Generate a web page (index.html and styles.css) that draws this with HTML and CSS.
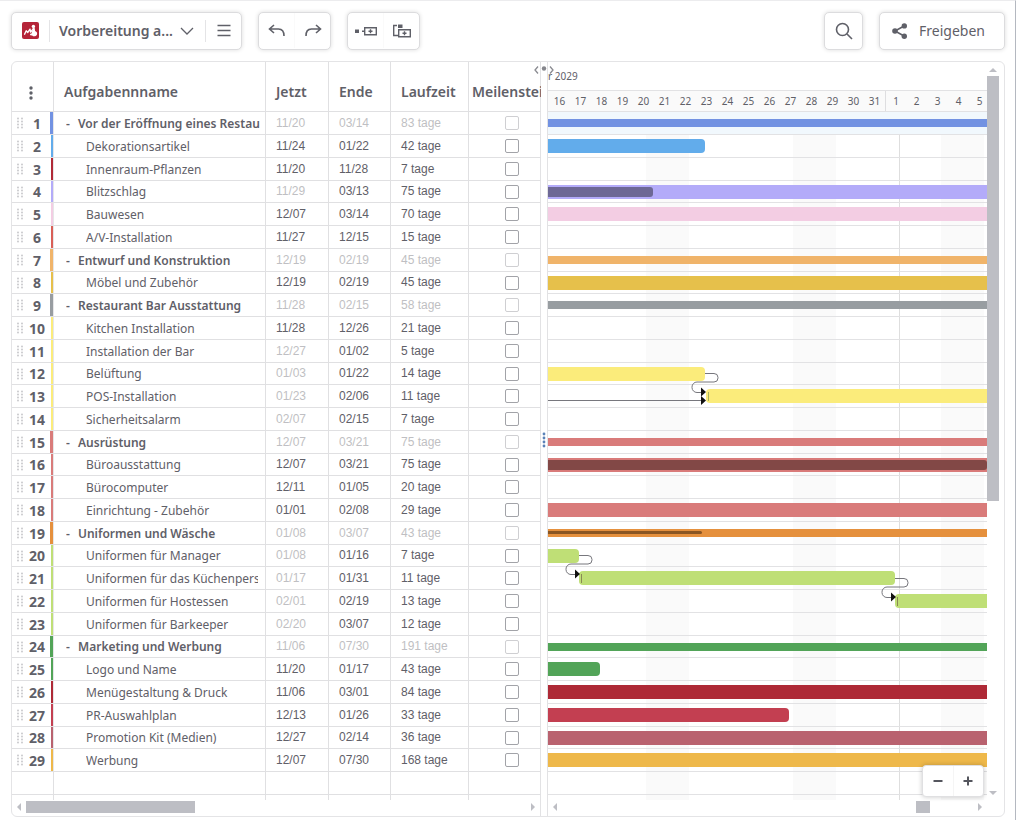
FILE: index.html
```html
<!DOCTYPE html>
<html lang="de">
<head>
<meta charset="utf-8">
<title>Vorbereitung auf die Eröffnung</title>
<link rel="stylesheet" href="styles.css">
</head>
<body>
<div class="app">
  <header class="toolbar">
    <div class="box">
      <button class="logo" aria-label="Startseite">
        <svg width="18" height="18" viewBox="0 0 18 18"><rect width="17" height="17" rx="2" fill="#b52438"/><path d="M2.600 12.200 4.200 8.800l1.600 1.600L8 7.200l.6 2.800 2-2.200" fill="none" stroke="#fff" stroke-width="1.400" stroke-linecap="round" stroke-linejoin="round"/><circle cx="11.400" cy="4.400" r="1.700" fill="#fff"/><path d="M10.200 6.400 12.600 5.600l.5 3.400c1.900.6 2.500 2.400 1.700 3.900-1 1.700-3.500 1.800-4.600.5l-1.900-.2-.4-1.300 1.900-.6c-.2-1.300.2-2.200 1-2.700z" fill="#fff"/></svg>
      </button>
      <button class="title">Vorbereitung a...
        <svg width="14" height="10" viewBox="0 0 14 10"><path d="M1 2l6 6 6-6" class="thin"/></svg>
      </button>
      <button class="menu" aria-label="Menü">
        <svg width="14" height="14" viewBox="0 0 14 14"><path d="M.5 1.500h13M.5 6.500h13M.5 11.500h13" class="thin"/></svg>
      </button>
    </div>
    <div class="box pair">
      <button aria-label="Rückgängig"><svg width="18" height="16" viewBox="0 0 18 16"><path d="M6 2 1.500 6 6 10M1.500 6h9c4 0 5.500 2 5.500 7" class="stroke"/></svg></button>
      <button aria-label="Wiederholen"><svg width="18" height="16" viewBox="0 0 18 16"><path d="M12 2l4.500 4L12 10M16.500 6h-9C3.500 6 2 8 2 13" class="stroke"/></svg></button>
    </div>
    <div class="box pair">
      <button aria-label="Aufgabe hinzufügen"><svg width="22" height="10" viewBox="0 0 22 10"><path d="M0 3.500h4v3.500H0z" fill="#5f6068"/><path d="M9.700 1.700h11.600v7H9.700zM7 5.200h2.500M13.500 5.200h4M15.500 3.200v4" class="icon"/></svg></button>
      <button aria-label="Unteraufgabe hinzufügen"><svg width="20" height="16" viewBox="0 0 20 16"><path d="M6 1.500h4.500V5H6z" fill="#5f6068"/><path d="M5 2.500H1.700v10H6M6.700 6.700h11.600v7H6.700zM10.500 10.200h4M12.500 8.200v4" class="icon"/></svg></button>
    </div>
    <button class="box search" aria-label="Suchen"><svg width="18" height="18" viewBox="0 0 18 18"><circle cx="7.500" cy="7.500" r="6" class="stroke"/><path d="M12 12l5 5" class="stroke"/></svg></button>
    <button class="box share"><svg width="16" height="16" viewBox="0 0 16 16"><path d="M12.500 2.800 3 8l9.500 5.300" class="stroke"/><circle cx="12.300" cy="2.900" r="2.700" fill="#5f6068"/><circle cx="3" cy="8" r="2.800" fill="#5f6068"/><circle cx="12.300" cy="13.200" r="2.700" fill="#5f6068"/></svg>Freigeben</button>
  </header>

  <main class="panel">
    <section class="list">
      <table>
        <colgroup><col class="c-num"><col class="c-name"><col class="c-start"><col class="c-end"><col class="c-time"><col class="c-mile"></colgroup>
        <thead>
          <tr>
            <th><button class="dots" aria-label="Spalten"><svg width="4" height="14" viewBox="0 0 4 14"><circle cx="2" cy="2" r="1.700"/><circle cx="2" cy="7" r="1.700"/><circle cx="2" cy="12" r="1.700"/></svg></button></th>
            <th>Aufgabennname</th><th>Jetzt</th><th>Ende</th><th>Laufzeit</th><th class="mile">Meilenstei</th>
          </tr>
        </thead>
        <tbody id="tasks"></tbody>
      </table>
      <div class="hscroll"><i class="arrow left"></i><i class="thumb wide"></i><i class="arrow right"></i></div>
    </section>

    <div class="splitter">
      <svg class="toggle" width="22" height="10" viewBox="0 0 22 10"><path d="M5 1.500 2 5l3 3.500M17 1.500 20 5l-3 3.500" fill="none" stroke="#8a8b91" stroke-width="1.300"/><circle cx="11" cy="3.500" r="2.200" fill="#85868c"/></svg>
      <svg class="grip" width="4" height="16" viewBox="0 0 4 16"><circle cx="2" cy="2" r="1.400"/><circle cx="2" cy="6" r="1.400"/><circle cx="2" cy="10" r="1.400"/><circle cx="2" cy="14" r="1.400"/></svg>
    </div>

    <section class="chart">
      <div class="month">r 2029</div>
      <div class="days" id="days"></div>
      <div class="canvas">
        <svg class="layer" aria-hidden="true"><g fill="#fafafa"><rect x="98" width="43" height="100%"/><rect x="245" width="43" height="100%"/><rect x="393" width="43" height="100%"/></g><rect x="351" width="1" height="100%" fill="#dedede"/></svg>
        <div class="bars" id="bars"></div>
        <svg class="layer" aria-hidden="true">
          <defs>
            <g id="link">
              <path d="M0 .5h9a4 4 0 0 1 4 4v.500a4 4 0 0 1-4 4H-8a5 5 0 0 0-5 5v.500a5 5 0 0 0 5 5h5" fill="none" stroke="#77777d"/>
              <path d="M-4 14.500 1 19l-5 4.500z" fill="#111"/>
            </g>
          </defs>
          <path d="M0 288.500h154" stroke="#77777d"/>
          <use href="#link" x="157" y="261"/>
          <path d="M153 284l5 4.500-5 4.500z" fill="#111"/>
          <use href="#link" x="31" y="443"/>
          <use href="#link" x="347" y="466"/>
          <path d="M160.500 280v9" stroke="#a9b45f"/><path d="M33.500 462v9M349.500 485v9" stroke="#8a8a55"/>
        </svg>
      </div>
      <div class="hscroll"><i class="arrow left"></i><i class="gap"></i><i class="thumb small"></i><i class="arrow right end"></i></div>
      <div class="zoom"><button aria-label="Verkleinern"><svg width="10" height="10" viewBox="0 0 10 10"><path d="M.5 5h9"/></svg></button><button aria-label="Vergrößern"><svg width="10" height="10" viewBox="0 0 10 10"><path d="M.5 5h9M5 .5v9"/></svg></button></div>
    </section>

    <div class="vscroll"><i class="arrow up"></i><i class="thumb tall"></i><i class="arrow down"></i></div>
  </main>
</div>
<script src="app.js"></script>
</body>
</html>
```
FILE: styles.css
```css
* { box-sizing: border-box; }
body { margin: 0; background: #fff; color: #5f6068; font-family: "Noto Sans", sans-serif; font-size: 12px; }
button { margin: 0; padding: 0; border: 0; background: none; font: inherit; color: inherit; }
svg { display: block; flex: none; }
.stroke { fill: none; stroke: #5f6068; stroke-width: 1.6; }
.thin { fill: none; stroke: #5f6068; stroke-width: 1.3; }
.icon { fill: none; stroke: #5f6068; stroke-width: 1.4; }

.app { border-top: 1px solid #ececee; border-right: 1px solid #b4b8c0; padding: 11px 10px 3px 11px; }
.toolbar { display: flex; gap: 16px; margin-bottom: 11px; }
.box { display: flex; align-items: center; height: 38px; padding-bottom: 1px; border: 1px solid #dcdcde; border-radius: 5px; background: #fff; box-shadow: 0 0 4px rgba(0, 0, 0, .14); }
.logo { padding: 0 9px 0 10px; }
.title { display: flex; align-items: center; justify-content: space-between; width: 157px; height: 22px; padding: 0 11px 0 9px; border: solid #e4e4e6; border-width: 0 1px; font-size: 14px; font-weight: 600; white-space: nowrap; }
.menu { padding: 0 10px 0 11px; }
.pair { width: 73px; }
.pair button { flex: 1; height: 35px; display: flex; align-items: center; justify-content: center; }
.pair button + button { border-left: 1px solid #fafafa; }
.search { width: 39px; justify-content: center; margin-left: auto; }
.share { width: 126px; gap: 11px; padding-left: 12px; font-size: 14px; }

.panel { display: flex; border: 1px solid #e4e4e6; border-radius: 6px; overflow: hidden; }
.list { width: 529px; flex: none; border-right: 1px solid #e2e2e4; }
table { width: 529px; table-layout: fixed; border-collapse: separate; border-spacing: 0; }
.c-num { width: 42px; } .c-name { width: 212px; } .c-start { width: 63px; } .c-end { width: 62px; } .c-time { width: 78px; } .c-mile { width: 72px; }
th, td { padding: 0 0 0 10px; border: solid #e0e0e2; border-width: 0 1px 1px 0; text-align: left; white-space: nowrap; overflow: hidden; }
th { height: 50px; padding-top: 10px; font-size: 14px; font-weight: 600; }
th:first-child { padding: 12px 0 0 17px; }
th.mile { padding-left: 3px; }
.dots { display: block; }
.dots svg { fill: #5f6068; }
tbody tr, .row { height: 23px; }
tbody tr:nth-child(4n), .row:nth-child(4n) { height: 22px; }
td { line-height: 21px; font-family: "Liberation Sans", sans-serif; }
td:last-child { padding: 0 0 0 36px; }
th:last-child, td:last-child { border-right: 0; }
td.num { padding: 0 0 0 4px; font-family: "Noto Sans", sans-serif; font-size: 14px; box-shadow: inset -2px 0 var(--c); border-right-color: #e6e6e8; }
td.group { box-shadow: inset -3px 0 var(--c); }
.numline { display: flex; align-items: center; }
.numline b { width: 26px; text-align: center; font-weight: 700; }
.numline svg { fill: #c4c4c8; }
td.name { font-family: "Noto Sans", sans-serif; padding: 0 7px 0 32px; }
td.name div { overflow: hidden; }
td.name.head { padding: 0 0 0 12px; font-weight: 600; }
.head button { display: inline-block; width: 12px; text-align: left; }
.faded { color: #bfbfc3; }
td input { appearance: none; display: block; width: 14px; height: 14px; margin: 0; border: 1px solid #a2a3a8; border-radius: 2px; background: #fff; }
td input.faded { border-color: #cfcfd2; }
tbody tr.tail, .row.tail { height: 5px; }
.tail td { height: 5px; line-height: 5px; border-bottom: 0; padding: 0; }

.splitter { position: relative; width: 7px; flex: none; border-right: 1px solid #e2e2e4; }
.toggle { position: absolute; z-index: 3; top: 3px; left: -8px; }
.grip { position: absolute; left: 1px; top: 370px; fill: #5b82b8; }

.chart { position: relative; flex: 1; min-width: 0; overflow: hidden; }
.month { height: 29px; border-bottom: 1px solid #e2e2e4; padding-top: 6px; font-size: 10px; line-height: 16px; }
.days { display: flex; height: 21px; padding-left: 1px; overflow: hidden; background: #fafafa; border-bottom: 1px solid #e2e2e4; font-size: 10px; line-height: 21px; }
.days span { flex: none; width: 21px; text-align: center; }
.days .first { border-left: 1px solid #dedee0; }
.canvas { position: relative; }
.layer { position: absolute; inset: 0; width: 100%; height: 100%; }
.bars { position: relative; }
.row { border-bottom: 1px solid #e2e2e4; overflow: hidden; }
.row:first-child { background: #f1f8fd; }
.row.tail { border: 0; }
.bar { display: flex; align-items: center; height: 14px; margin-top: 4px; background: var(--c); }
.bar.summary { height: 8px; margin-top: 7px; }
.bar.ends { border-radius: 0 4px 4px 0; }
.bar.starts { border-top-left-radius: 4px; border-bottom-left-radius: 4px; }
.done { border-radius: 0 3px 3px 0; height: 10px; }
.summary .done { height: 3px; margin-bottom: 1px; }

.hscroll { display: flex; align-items: center; height: 16px; padding: 0 5px 2px; }
.arrow { width: 0; height: 0; border: 4px solid transparent; flex: none; }
.left { border-right-color: #bdbec4; border-left: 0; }
.right { border-left-color: #bdbec4; border-right: 0; margin-left: auto; }
.right.end { margin-left: 48px; }
.up { border-bottom-color: #bdbec4; border-top: 0; }
.down { border-top-color: #bdbec4; border-bottom: 0; margin-top: auto; }
.thumb { background: #bdbec4; flex: none; }
.wide { width: 169px; height: 12px; margin-left: 5px; }
.small { width: 14px; height: 12px; }
.gap { flex: 1; }
.vscroll { display: flex; flex-direction: column; align-items: center; width: 17px; flex: none; padding: 6px 5px 21px 0; }
.tall { width: 12px; height: 425px; margin-top: 4px; }

.zoom { position: absolute; right: 3px; bottom: 19px; display: flex; width: 62px; height: 32px; background: #fff; border: 1px solid #e0e0e2; border-radius: 4px; box-shadow: 0 0 5px rgba(0, 0, 0, .22); z-index: 2; }
.zoom button { flex: 1; display: flex; align-items: center; justify-content: center; }
.zoom button + button { border-left: 1px solid #f5f5f5; }
.zoom svg { fill: none; stroke: #55565e; stroke-width: 2; }
```
FILE: app.js
```js
// name, start, end, days, colour, flags: g = group, s = start faded
// bar: [from, to] in chart pixels, to = null runs past the edge; done: [width, colour]
const tasks = [
  ["Vor der Eröffnung eines Restau", "11/20", "03/14", 83, "#7292e2", "g", [0, null]],
  ["Dekorationsartikel", "11/24", "01/22", 42, "#62aceb", "", [0, 157]],
  ["Innenraum-Pflanzen", "11/20", "11/28", 7, "#b02a37", "", null],
  ["Blitzschlag", "11/29", "03/13", 75, "#b3abf9", "s", [0, null], ["105px", "#6d6895"]],
  ["Bauwesen", "12/07", "03/14", 70, "#f3cde3", "", [0, null]],
  ["A/V-Installation", "11/27", "12/15", 15, "#d95f57", "", null],
  ["Entwurf und Konstruktion", "12/19", "02/19", 45, "#f0b46a", "g", [0, null]],
  ["Möbel und Zubehör", "12/19", "02/19", 45, "#e6c04b", "", [0, null]],
  ["Restaurant Bar Ausstattung", "11/28", "02/15", 58, "#989da1", "g", [0, null]],
  ["Kitchen Installation", "11/28", "12/26", 21, "#fbec7b", "", null],
  ["Installation der Bar", "12/27", "01/02", 5, "#fbec7b", "s", null],
  ["Belüftung", "01/03", "01/22", 14, "#fbec7b", "s", [0, 157]],
  ["POS-Installation", "01/23", "02/06", 11, "#fbec7b", "s", [158, null]],
  ["Sicherheitsalarm", "02/07", "02/15", 7, "#fbec7b", "s", null],
  ["Ausrüstung", "12/07", "03/21", 75, "#d97b7a", "g", [0, null]],
  ["Büroausstattung", "12/07", "03/21", 75, "#d97b7a", "", [0, null], ["100%", "#824846"]],
  ["Bürocomputer", "12/11", "01/05", 20, "#d97b7a", "", null],
  ["Einrichtung - Zubehör", "01/01", "02/08", 29, "#d97b7a", "", [0, null]],
  ["Uniformen und Wäsche", "01/08", "03/07", 43, "#e5903d", "g", [0, null], ["154px", "#8a5623"]],
  ["Uniformen für Manager", "01/08", "01/16", 7, "#bfdf76", "s", [0, 31]],
  ["Uniformen für das Küchenpers", "01/17", "01/31", 11, "#bfdf76", "s", [31, 347]],
  ["Uniformen für Hostessen", "02/01", "02/19", 13, "#bfdf76", "s", [347, null]],
  ["Uniformen für Barkeeper", "02/20", "03/07", 12, "#bfdf76", "s", null],
  ["Marketing und Werbung", "11/06", "07/30", 191, "#52a458", "g", [0, null]],
  ["Logo und Name", "11/20", "01/17", 43, "#52a458", "", [0, 52]],
  ["Menügestaltung & Druck", "11/06", "03/01", 84, "#ae2936", "", [0, null]],
  ["PR-Auswahlplan", "12/13", "01/26", 33, "#c33f51", "", [0, 241]],
  ["Promotion Kit (Medien)", "12/27", "02/14", 36, "#b9626f", "", [0, null]],
  ["Werbung", "12/07", "07/30", 168, "#eeb84a", "", [0, null]]
];

let grip = '<svg width="8" height="12" viewBox="0 0 8 12">';
for (let y = 0; y < 4; y++) for (let x = 0; x < 2; x++) grip += `<circle cx="${2 + x * 4}" cy="${1.5 + y * 3}" r=".9"/>`;
grip += "</svg>";

let rows = "", bars = "";
tasks.forEach(([name, start, end, days, color, flag, bar, done], i) => {
  const group = flag === "g";
  const f = group ? "faded" : "";
  const label = name.replace("&", "&amp;");
  rows += `<tr><td class="num ${group ? "group" : ""}" style="--c:${color}"><div class="numline">${grip}<b>${i + 1}</b></div></td>
    <td class="name ${group ? "head" : ""}"><div>${group ? '<button aria-label="Einklappen">-</button>' : ""}${label}</div></td>
    <td class="${flag ? "faded" : ""}">${start}</td><td class="${f}">${end}</td><td class="${f}">${days} tage</td>
    <td><input type="checkbox" class="${f}" aria-label="Meilenstein: ${label}"></td></tr>`;
  let html = "";
  if (bar) {
    const [from, to] = bar;
    const cls = ["bar", group && "summary", from && "starts", to && "ends"].filter(Boolean).join(" ");
    const width = to ? `width:${to - from}px;` : "";
    html = `<div class="${cls}" style="--c:${color};margin-left:${from}px;${width}">${done ? `<div class="done" style="width:${done[0]};background:${done[1]}"></div>` : ""}</div>`;
  }
  bars += `<div class="row">${html}</div>`;
});
const empty = "<td></td>".repeat(6);
document.getElementById("tasks").innerHTML = rows + `<tr>${empty}</tr><tr class="tail">${empty}</tr>`;
document.getElementById("bars").innerHTML = bars + '<div class="row"></div><div class="row tail"></div>';

let dayHtml = "";
for (let d = 16; d <= 36; d++) dayHtml += `<span class="${d === 32 ? "first" : ""}">${d > 31 ? d - 31 : d}</span>`;
document.getElementById("days").innerHTML = dayHtml;
```
